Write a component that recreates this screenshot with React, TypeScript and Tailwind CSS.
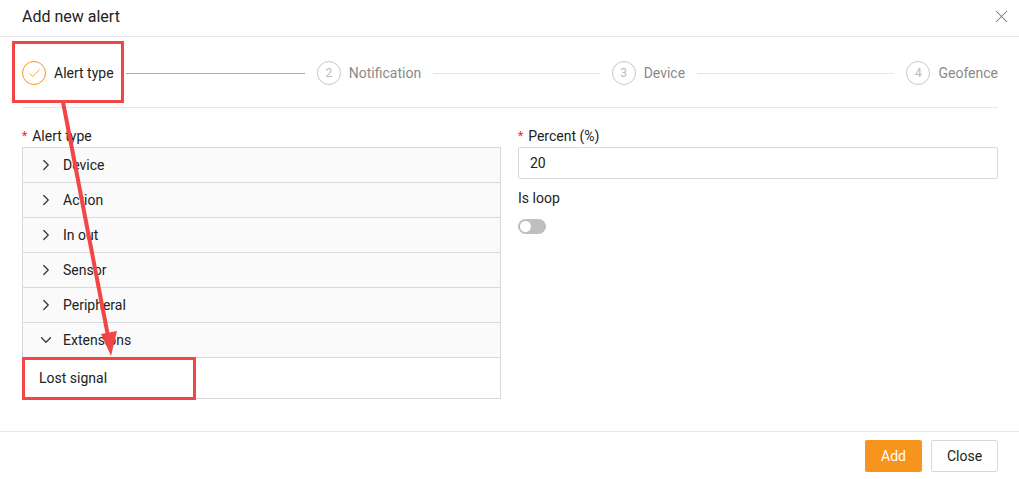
import { ChevronRight, ChevronDown, X, Check } from 'lucide-react';

const STEPS = [
  { n: 1, label: 'Alert type', done: true },
  { n: 2, label: 'Notification' },
  { n: 3, label: 'Device' },
  { n: 4, label: 'Geofence' },
];

const GROUPS = ['Device', 'Action', 'In out', 'Sensor', 'Peripheral', 'Extensions'];

export default function App() {
  return (
    <div className="relative w-[1019px] h-[479px] bg-white text-[14px] text-[#333] font-['Roboto',sans-serif] overflow-hidden">
      {/* header */}
      <div className="h-[37px] flex items-center justify-between pl-[22px] pr-[7px] border-b border-[#e9e9e9]">
        <span className="text-[16px] text-[#222] -mt-[2px]">Add new alert</span>
        <X className="w-[21px] h-[21px] text-[#777] -mt-[3px]" strokeWidth={1.2} />
      </div>

      <div className="px-[21px] pl-[22px]">
        {/* steps */}
        <div className="h-[71px] pt-[2px] flex items-center border-b border-[#e9e9e9]">
          {STEPS.map((s, i) => (
            <div key={s.n} className={`flex items-center ${i < STEPS.length - 1 ? 'flex-1' : ''}`}>
              <div
                className={`w-[24px] h-[24px] rounded-full border flex items-center justify-center text-[12px] ${
                  s.done ? 'border-[#f7941d] text-[#f7941d]' : 'border-[#c8c8c8] text-[#bbb]'
                }`}
              >
                {s.done ? <Check className="w-[15px] h-[15px]" strokeWidth={1.3} /> : s.n}
              </div>
              <span className={`ml-[8px] whitespace-nowrap ${s.done ? 'text-[#222]' : 'text-[#8a8a8a]'}`}>{s.label}</span>
              {i < STEPS.length - 1 && (
                <div className={`flex-1 h-px mx-[12px] ${s.done ? 'bg-[#e89a55]' : 'bg-[#e6e6e6]'}`} />
              )}
            </div>
          ))}
        </div>

        {/* body */}
        <div className="flex gap-[17px] pt-[19px]">
          <div className="w-[479px]">
            <div className="flex items-center h-[18px] mb-[2px]">
              <span className="text-[#f5222d] mr-[5px] text-[12px]">*</span>
              <span className="text-[#222]">Alert type</span>
            </div>
            <div className="border border-[#d9d9d9]">
              {GROUPS.map((g) => {
                const open = g === 'Extensions';
                return (
                  <div key={g}>
                    <div className="h-[35px] bg-[#fafafa] border-b border-[#d9d9d9] flex items-center pl-[14px]">
                      {open ? (
                        <ChevronDown className="w-[18px] h-[18px] text-[#333]" strokeWidth={1.6} />
                      ) : (
                        <ChevronRight className="w-[18px] h-[18px] text-[#333]" strokeWidth={1.6} />
                      )}
                      <span className="ml-[8px] text-[#222]">{g}</span>
                    </div>
                    {open && (
                      <div className="h-[40px] flex items-center pl-[16px] text-[#222]">Lost signal</div>
                    )}
                  </div>
                );
              })}
            </div>
          </div>

          <div className="flex-1">
            <div className="flex items-center h-[18px] mb-[2px]">
              <span className="text-[#f5222d] mr-[5px] text-[12px]">*</span>
              <span className="text-[#222]">Percent (%)</span>
            </div>
            <div className="h-[32px] border border-[#d9d9d9] rounded-[2px] flex items-center pl-[11px] text-[#222]">20</div>
            <div className="mt-[10px] h-[18px] flex items-center text-[#222]">Is loop</div>
            <div className="mt-[12px] w-[28px] h-[15px] rounded-full bg-[#bfbfbf] relative">
              <div className="absolute left-[2px] top-[2px] w-[11px] h-[11px] rounded-full bg-white" />
            </div>
          </div>
        </div>
      </div>

      {/* footer */}
      <div className="absolute left-0 right-0 top-[431px] border-t border-[#e9e9e9] flex justify-end gap-[9px] pt-[8px] pr-[21px]">
        <button className="h-[32px] w-[57px] bg-[#f7941d] text-white rounded-[2px]">Add</button>
        <button className="h-[32px] w-[67px] border border-[#d9d9d9] bg-white text-[#222] rounded-[2px]">Close</button>
      </div>

      {/* annotations */}
      <div className="absolute left-[12px] top-[41px] w-[112px] h-[62px] border-[3px] border-[#f24646]" />
      <div className="absolute left-[22px] top-[357px] w-[174px] h-[43px] border-[3px] border-[#f24646]" />
      <svg className="absolute left-0 top-0 pointer-events-none" width="1019" height="479">
        <line x1="63" y1="102" x2="108" y2="336" stroke="#f24646" strokeWidth="4" />
        <polygon points="111,356 101,334 117,331" fill="#f24646" />
      </svg>
    </div>
  );
}
